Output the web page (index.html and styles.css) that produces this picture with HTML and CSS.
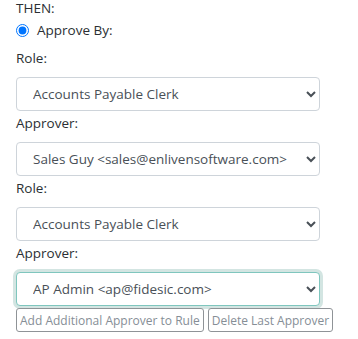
FILE: index.html
```html
<!DOCTYPE html>
<html lang="en">
<head>
    <meta charset="UTF-8">
    <meta name="viewport" content="width=device-width, initial-scale=1.0">
    <title>Rule</title>
    <link rel="stylesheet" href="styles.css">
</head>
<body>
    <div class="rule">
        <div class="then">THEN:</div>
        <label class="radio-row">
            <input type="radio" name="action" checked>
            <span>Approve By:</span>
        </label>

        <div class="approver-step">
            <label class="field-label">Role:</label>
            <select class="field">
                <option>Accounts Payable Clerk</option>
            </select>
            <label class="field-label">Approver:</label>
            <select class="field">
                <option>Sales Guy &lt;sales@enlivensoftware.com&gt;</option>
            </select>
        </div>

        <div class="approver-step">
            <label class="field-label">Role:</label>
            <select class="field">
                <option>Accounts Payable Clerk</option>
            </select>
            <label class="field-label">Approver:</label>
            <select class="field active">
                <option>AP Admin &lt;ap@fidesic.com&gt;</option>
            </select>
        </div>

        <div class="actions">
            <button class="btn">Add Additional Approver to Rule</button>
            <button class="btn">Delete Last Approver</button>
        </div>
    </div>
</body>
</html>
```

FILE: styles.css
```css
* {
    box-sizing: border-box;
}

body {
    margin: 0;
    font-family: 'Open Sans', 'Noto Sans', sans-serif;
    font-size: 13.5px;
    line-height: 21px;
    color: #2b2f33;
    background: white;
}

.rule {
    padding-left: 16px;
    width: 340px;
}

.then {
    margin-top: -2px;
}

.radio-row {
    display: flex;
    align-items: center;
    height: 21px;
    margin-top: 1px;
    margin-bottom: 7px;
}

.radio-row input {
    margin: 0 8px 0 0;
    width: 13px;
    height: 13px;
}

.field-label {
    display: block;
    margin-bottom: 8px;
}

.field {
    display: block;
    width: 304px;
    height: 34px;
    margin-bottom: 2px;
    padding: 0 12px;
    font-family: inherit;
    font-size: 13.5px;
    color: #495057;
    background: white;
    border: 1px solid #ced4da;
    border-radius: 4px;
    outline: none;
}

.field.active {
    border-color: #7fc6be;
    box-shadow: 0 0 0 3px #d3e5e2;
}

.actions {
    display: flex;
    gap: 4px;
}

.btn {
    flex: none;
    height: 24px;
    padding: 0 3px;
    white-space: nowrap;
    font-family: inherit;
    font-size: 12px;
    color: #868e96;
    background: white;
    border: 1px solid #8f9397;
    border-radius: 3px;
}
```
